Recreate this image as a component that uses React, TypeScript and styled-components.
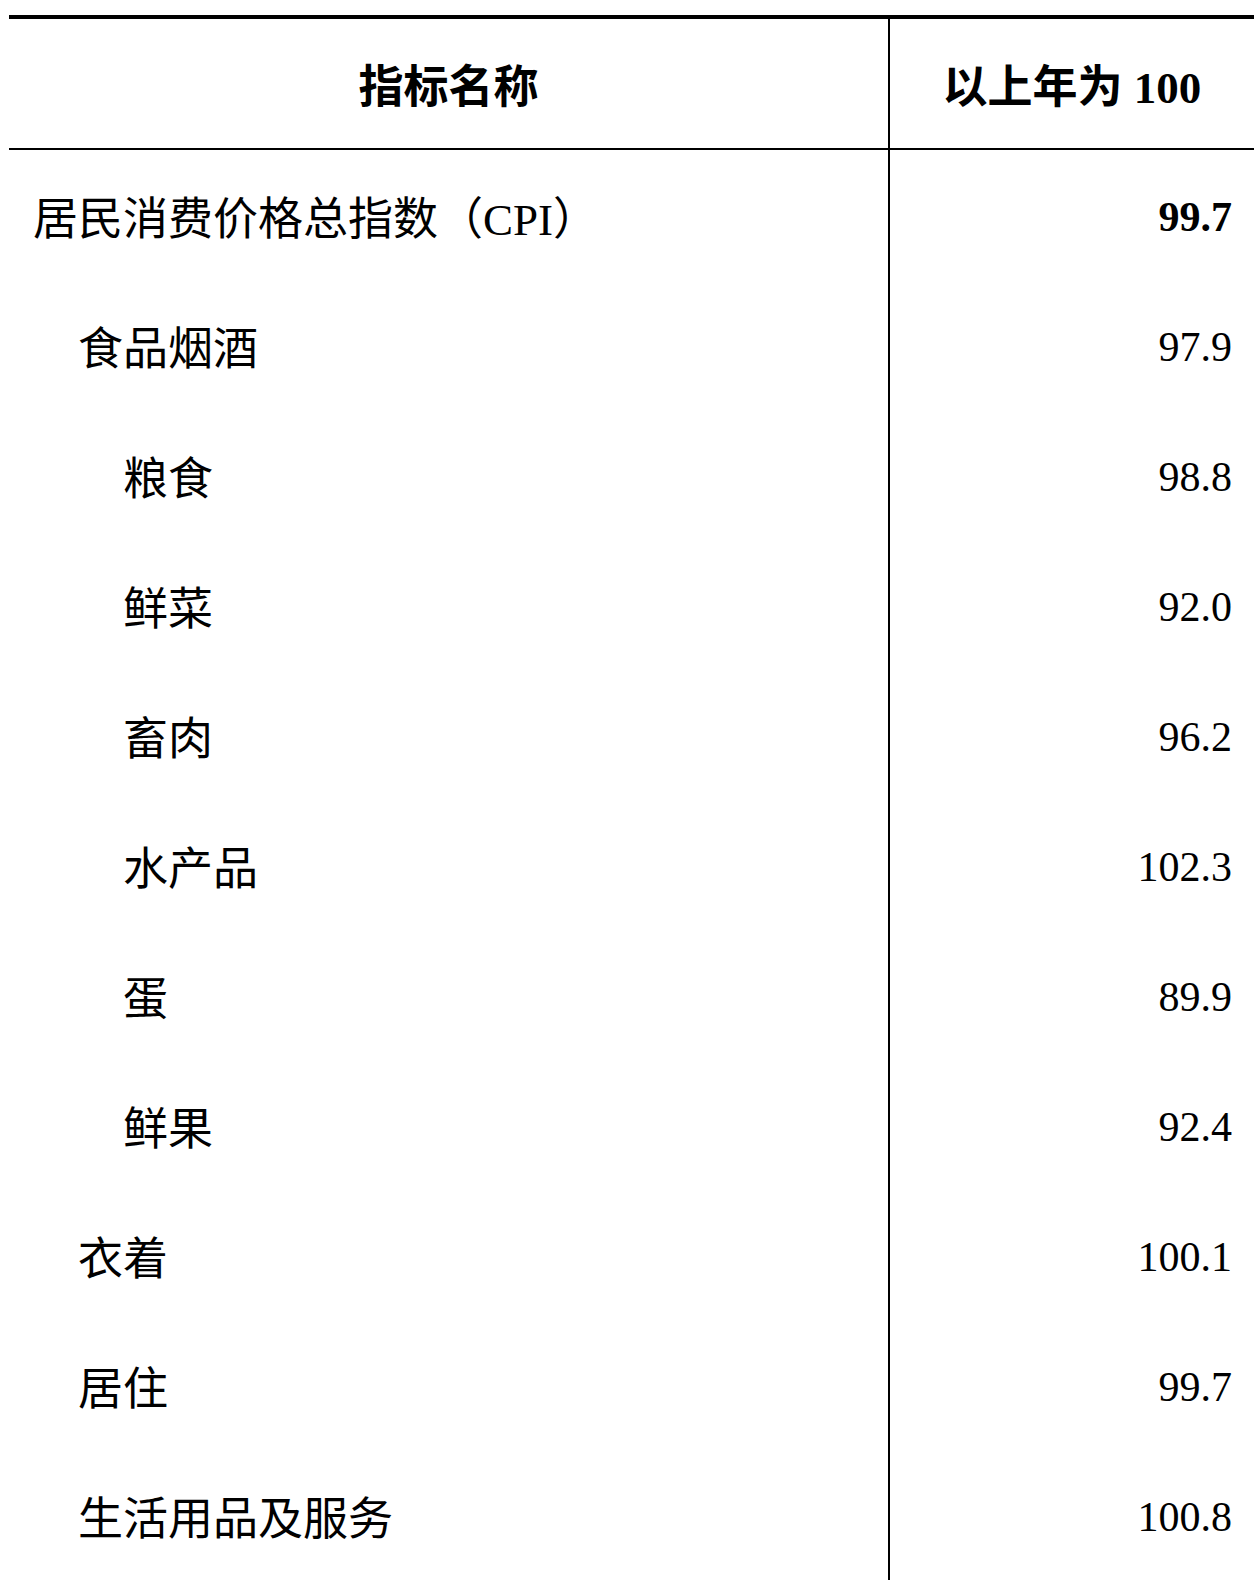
import React from "react";
import styled, { createGlobalStyle } from "styled-components";

type Item = { name: string; level: number; value: string; strong?: boolean };

const items: Item[] = [
  { name: "居民消费价格总指数（CPI）", level: 0, value: "99.7", strong: true },
  { name: "食品烟酒", level: 1, value: "97.9" },
  { name: "粮食", level: 2, value: "98.8" },
  { name: "鲜菜", level: 2, value: "92.0" },
  { name: "畜肉", level: 2, value: "96.2" },
  { name: "水产品", level: 2, value: "102.3" },
  { name: "蛋", level: 2, value: "89.9" },
  { name: "鲜果", level: 2, value: "92.4" },
  { name: "衣着", level: 1, value: "100.1" },
  { name: "居住", level: 1, value: "99.7" },
  { name: "生活用品及服务", level: 1, value: "100.8" },
];

const GlobalStyle = createGlobalStyle`
  html, body {
    margin: 0;
    padding: 0;
    background: #ffffff;
    overflow: hidden;
  }
  body {
    font-family: "Liberation Serif", "Noto Sans CJK SC", serif;
    color: #000000;
  }
`;

const Page = styled.div`
  width: 1254px;
  height: 1580px;
  padding: 15px 0 0 9px;
  box-sizing: border-box;
  overflow: hidden;
`;

const Table = styled.div`
  display: grid;
  grid-template-columns: 879px 1fr;
  border-top: 4px solid #000;
  width: 1245px;
`;

const HeadCell = styled.div<{ $right?: boolean }>`
  height: 131px;
  display: flex;
  align-items: center;
  justify-content: center;
  font-size: 45px;
  font-weight: 700;
  border-bottom: 2.5px solid #000;
  border-left: ${(p) => (p.$right ? "2.5px solid #000" : "none")};
  box-sizing: border-box;
`;

const NameCell = styled.div<{ $level: number }>`
  height: 130px;
  display: flex;
  align-items: center;
  padding-left: ${(p) => 24 + p.$level * 45}px;
  font-size: 45px;
  white-space: nowrap;
`;

const ValueCell = styled.div<{ $strong?: boolean }>`
  height: 130px;
  display: flex;
  align-items: center;
  justify-content: flex-end;
  padding-right: 22px;
  padding-top: 3px;
  border-left: 2.5px solid #000;
  font-size: 42px;
  font-weight: ${(p) => (p.$strong ? 700 : 400)};
  box-sizing: border-box;
`;

const Filler = styled.div<{ $right?: boolean }>`
  height: 40px;
  border-left: ${(p) => (p.$right ? "2.5px solid #000" : "none")};
`;

export default function App() {
  return (
    <>
      <GlobalStyle />
      <Page>
        <Table>
          <HeadCell>指标名称</HeadCell>
          <HeadCell $right>以上年为 100</HeadCell>
          {items.map((it) => (
            <React.Fragment key={it.name}>
              <NameCell $level={it.level}>{it.name}</NameCell>
              <ValueCell $strong={it.strong}>{it.value}</ValueCell>
            </React.Fragment>
          ))}
          <Filler />
          <Filler $right />
        </Table>
      </Page>
    </>
  );
}
